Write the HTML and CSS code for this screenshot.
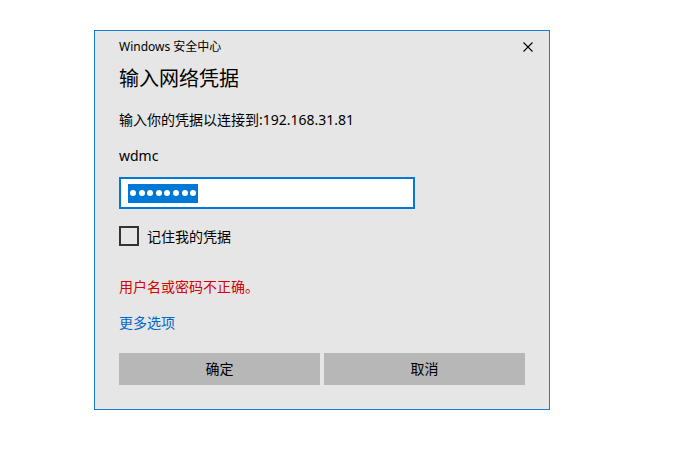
FILE: index.html
```html
<!DOCTYPE html>
<html lang="zh-CN">
<head>
  <meta charset="UTF-8">
  <title>Windows 安全中心</title>
  <link rel="stylesheet" href="styles.css">
</head>
<body>
  <div class="dialog">
    <div class="titlebar">
      <span class="app-name">Windows 安全中心</span>
      <svg class="close" width="10" height="10" viewBox="0 0 10 10">
        <path d="M0.5 0.5 L9.5 9.5 M9.5 0.5 L0.5 9.5" stroke="#000" stroke-width="1.1" fill="none"/>
      </svg>
    </div>

    <div class="content">
      <h1>输入网络凭据</h1>
      <p class="prompt">输入你的凭据以连接到:192.168.31.81</p>
      <p class="user">wdmc</p>

      <div class="password">
        <span class="selection">
          <i></i><i></i><i></i><i></i><i></i><i></i><i></i><i></i>
        </span>
      </div>

      <label class="remember">
        <span class="box"></span>
        记住我的凭据
      </label>

      <p class="error">用户名或密码不正确。</p>
      <a class="more" href="#">更多选项</a>

      <div class="buttons">
        <button>确定</button>
        <button>取消</button>
      </div>
    </div>
  </div>
</body>
</html>
```

FILE: styles.css
```css
body {
  margin: 0;
  padding: 30px 0 0 94px;
  background-color: #fff;
  font-family: "Noto Sans", "Noto Sans CJK SC", sans-serif;
  color: #000;
}

.dialog {
  width: 454px;
  height: 378px;
  border: 1px solid #1a7fd4;
  background-color: #e6e6e6;
}

.titlebar {
  display: flex;
  justify-content: space-between;
  align-items: center;
  padding: 8px 16px 0 24px;
  height: 16px;
}

.app-name {
  font-size: 12px;
  line-height: 16px;
}

.close {
  display: block;
}

.content {
  padding: 0 23px 0 24px;
}

h1 {
  margin: 10px 0 0;
  font-size: 20px;
  line-height: 28px;
  font-weight: normal;
}

p {
  margin: 0;
  font-size: 14px;
  line-height: 20px;
}

.prompt {
  margin-top: 17px;
}

.user {
  margin-top: 16px;
}

.password {
  margin-top: 11px;
  width: 285px;
  height: 28px;
  border: 2px solid #0078d7;
  background-color: #fff;
  display: flex;
  align-items: center;
  padding-left: 7px;
}

.selection {
  display: flex;
  align-items: center;
  gap: 2.6px;
  height: 19px;
  padding: 0 2px;
  background-color: #0078d7;
}

.selection i {
  width: 6px;
  height: 6px;
  border-radius: 50%;
  background-color: #fff;
}

.remember {
  margin-top: 17px;
  display: flex;
  align-items: center;
  gap: 8px;
  height: 20px;
  font-size: 14px;
}

.box {
  width: 16px;
  height: 16px;
  border: 2px solid #333;
}

.error {
  margin-top: 31px;
  color: #d40000;
}

.more {
  display: block;
  margin-top: 16px;
  font-size: 14px;
  line-height: 20px;
  color: #0066cc;
  text-decoration: none;
  width: max-content;
}

.buttons {
  margin-top: 20px;
  display: grid;
  grid-template-columns: 201px 201px;
  gap: 4px;
}

button {
  height: 32px;
  border: none;
  background-color: #b7b7b7;
  font-family: inherit;
  font-size: 14px;
  line-height: 20px;
  color: #000;
  padding: 0;
}
```
